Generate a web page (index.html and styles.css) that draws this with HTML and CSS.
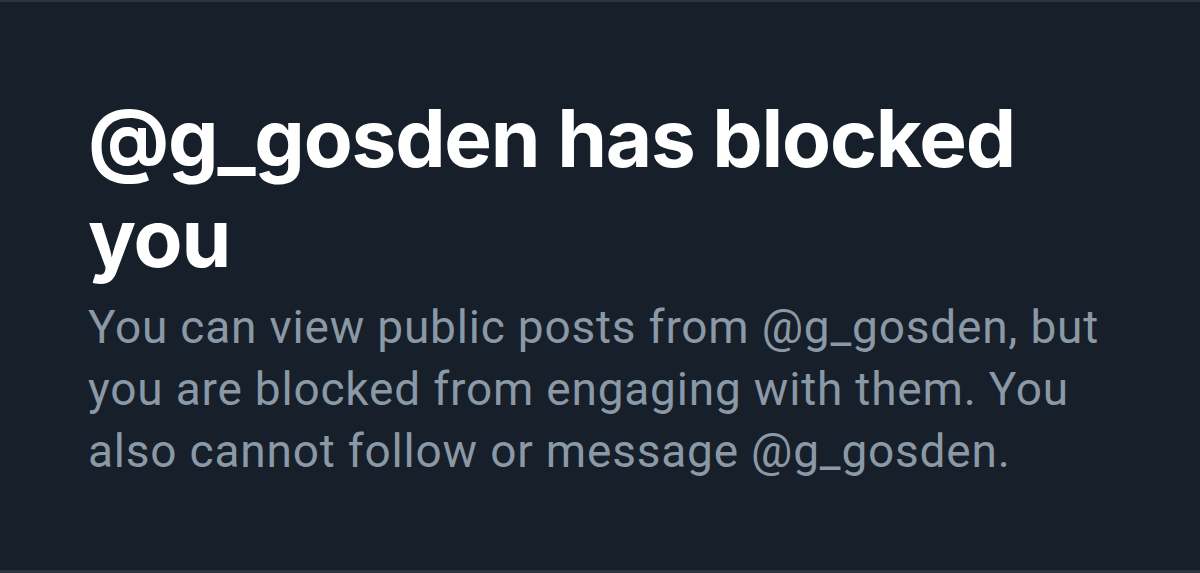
FILE: index.html
```html
<!DOCTYPE html>
<html lang="en">
<head>
<meta charset="utf-8">
<title>Blocked</title>
<link rel="stylesheet" href="styles.css">
</head>
<body>
<main class="panel">
  <section class="notice">
    <h1 class="notice-title">@g_gosden has blocked you</h1>
    <p class="notice-text">You can view public posts from @g_gosden, but you are blocked from engaging with them. You also cannot follow or message @g_gosden.</p>
  </section>
</main>
</body>
</html>
```

FILE: styles.css
```css
html, body {
  margin: 0;
  padding: 0;
  background: #17202a;
}
.panel {
  box-sizing: border-box;
  height: 573px;
  border-top: 2px solid #2b343e;
  border-bottom: 3px solid #2b343e;
  padding: 86px 60px 0 88px;
  background: #17202a;
}
.notice-title {
  margin: 0;
  font-family: Inter, "Noto Sans", sans-serif;
  font-weight: 700;
  font-size: 80px;
  line-height: 100px;
  color: #ffffff;
  letter-spacing: -1.2px;
}
.notice-text {
  margin: 8px 0 0;
  font-family: Roboto, "Noto Sans", sans-serif;
  font-size: 46px;
  line-height: 62px;
  letter-spacing: 0.8px;
  color: #8b98a5;
}
```
